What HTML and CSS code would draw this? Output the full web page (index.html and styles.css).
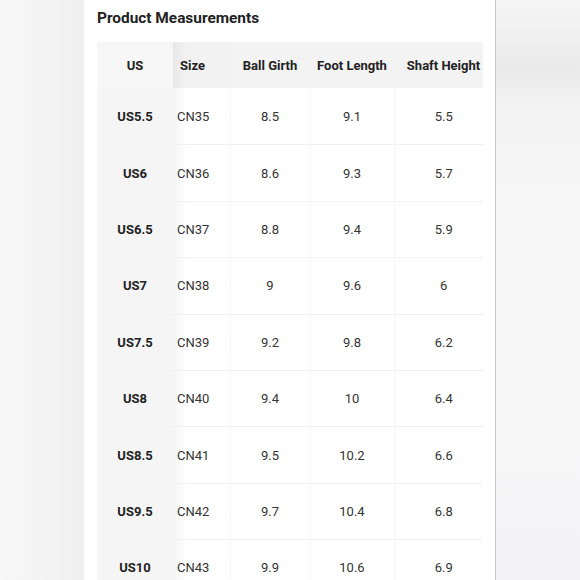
FILE: index.html
```html
<!DOCTYPE html>
<html>
<head>
<meta charset="utf-8">
<link rel="stylesheet" href="styles.css">
</head>
<body>
<div class="page">
  <div class="side side-left"></div>
  <div class="card">
    <h2 class="title">Product Measurements</h2>
    <div class="table-scroll">
    <table class="sizes">
      <colgroup>
        <col class="w-us">
        <col class="w-size">
        <col class="w-ball">
        <col class="w-foot">
        <col class="w-shaft">
      </colgroup>
      <thead>
        <tr>
          <th class="c-us">US</th>
          <th class="c-size">Size</th>
          <th class="c-num">Ball Girth</th>
          <th class="c-num">Foot Length</th>
          <th class="c-num">Shaft Height</th>
        </tr>
      </thead>
      <tbody>
        <tr><td class="c-us">US5.5</td><td class="c-size">CN35</td><td class="c-num">8.5</td><td class="c-num">9.1</td><td class="c-num">5.5</td></tr>
        <tr><td class="c-us">US6</td><td class="c-size">CN36</td><td class="c-num">8.6</td><td class="c-num">9.3</td><td class="c-num">5.7</td></tr>
        <tr><td class="c-us">US6.5</td><td class="c-size">CN37</td><td class="c-num">8.8</td><td class="c-num">9.4</td><td class="c-num">5.9</td></tr>
        <tr><td class="c-us">US7</td><td class="c-size">CN38</td><td class="c-num">9</td><td class="c-num">9.6</td><td class="c-num">6</td></tr>
        <tr><td class="c-us">US7.5</td><td class="c-size">CN39</td><td class="c-num">9.2</td><td class="c-num">9.8</td><td class="c-num">6.2</td></tr>
        <tr><td class="c-us">US8</td><td class="c-size">CN40</td><td class="c-num">9.4</td><td class="c-num">10</td><td class="c-num">6.4</td></tr>
        <tr><td class="c-us">US8.5</td><td class="c-size">CN41</td><td class="c-num">9.5</td><td class="c-num">10.2</td><td class="c-num">6.6</td></tr>
        <tr><td class="c-us">US9.5</td><td class="c-size">CN42</td><td class="c-num">9.7</td><td class="c-num">10.4</td><td class="c-num">6.8</td></tr>
        <tr><td class="c-us">US10</td><td class="c-size">CN43</td><td class="c-num">9.9</td><td class="c-num">10.6</td><td class="c-num">6.9</td></tr>
      </tbody>
    </table>
    </div>
  </div>
  <div class="side side-right"></div>
</div>
</body>
</html>
```

FILE: styles.css
```css
html, body {
  margin: 0;
  padding: 0;
}
body {
  width: 580px;
  height: 580px;
  overflow: hidden;
  font-family: Roboto, "Liberation Sans", sans-serif;
  color: #222;
  background: #f6f6f6;
}
.page {
  display: flex;
  height: 580px;
}
.side-left {
  width: 84px;
  flex: none;
  background: linear-gradient(to right, #f7f7f7, #f3f3f3 60%, #efefef);
}
.side-right {
  flex: 1;
  background:
    linear-gradient(to bottom, #f6f6f6 0, #ececec 55px, #eaeaea 70px, #f4f4f4 110px, #f7f7f7 300px, #f4f4f6 580px);
}
.card {
  flex: none;
  width: 398px;
  background: #fff;
  border-right: 1px solid #c9c9c9;
  padding: 8px 0 0 13px;
  overflow: hidden;
}
.title {
  margin: 0 0 14px 0;
  font-size: 15.4px;
  line-height: 20px;
  font-weight: 700;
  color: #222;
}
.table-scroll {
  width: 386px;
  overflow: hidden;
}
.sizes {
  border-collapse: collapse;
  table-layout: fixed;
  width: 396px;
  font-size: 13px;
}
.w-us { width: 76px; }
.w-size { width: 57px; }
.w-ball { width: 80px; }
.w-foot { width: 84px; }
.w-shaft { width: 99px; }
.sizes th {
  height: 46px;
  padding: 0;
  font-weight: 700;
  color: #222;
  background: #f3f3f3;
  white-space: nowrap;
}
.sizes td {
  height: 55.4px;
  padding: 0;
  color: #333;
  border-top: 1px solid #f1f1f1;
  border-left: 1px solid #f6f6f6;
}
.sizes tbody tr:first-child td {
  border-top: none;
  height: 56.4px;
}
.sizes .c-us {
  text-align: center;
  font-weight: 700;
  color: #222;
  background: #f5f5f5;
  border-left: none;
  border-top: none;
}
.sizes th.c-us {
  background: #f6f6f6;
}
.sizes .c-size {
  text-align: left;
  padding-left: 4px;
  border-left: none;
  background-image: linear-gradient(to right, rgba(0, 0, 0, 0.045), rgba(0, 0, 0, 0) 14px);
}
.sizes th.c-size {
  padding-left: 7px;
  background-color: #f2f2f2;
}
.sizes .c-num {
  text-align: center;
}
```
